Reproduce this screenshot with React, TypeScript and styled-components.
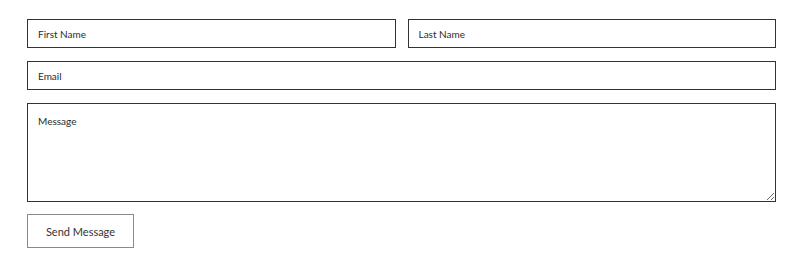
import React from "react";
import styled, { createGlobalStyle } from "styled-components";

const GlobalStyle = createGlobalStyle`
  body {
    margin: 0;
    background: #ffffff;
    font-family: "Lato", "Liberation Sans", sans-serif;
  }
`;

const App: React.FC = () => {
  return (
    <>
      <GlobalStyle />
      <ContactForm onSubmit={(e) => e.preventDefault()}>
        <NameRow>
          <Field type="text" placeholder="First Name" />
          <Field type="text" placeholder="Last Name" />
        </NameRow>
        <Field type="email" placeholder="Email" />
        <MessageArea placeholder="Message" />
        <SendButton type="submit">Send Message</SendButton>
      </ContactForm>
    </>
  );
};

export default App;

const ContactForm = styled.form`
  display: flex;
  flex-direction: column;
  align-items: flex-start;
  gap: 13px;
  padding: 19px 24px 0 27px;
`;

const NameRow = styled.div`
  display: grid;
  grid-template-columns: 1fr 1fr;
  gap: 12px;
  width: 100%;
`;

const Field = styled.input`
  box-sizing: border-box;
  width: 100%;
  height: 29px;
  padding: 0 10px;
  border: 1px solid #333333;
  border-radius: 0;
  background: #ffffff;
  font-family: "Lato", "Liberation Sans", sans-serif;
  font-size: 10px;
  color: #2b2b2b;
  outline: none;

  &::placeholder {
    color: #2b2b2b;
  }
`;

const MessageArea = styled.textarea`
  box-sizing: border-box;
  width: 100%;
  height: 99px;
  padding: 11px 10px;
  border: 1px solid #333333;
  border-radius: 0;
  background: #ffffff;
  font-family: "Lato", "Liberation Sans", sans-serif;
  font-size: 10px;
  color: #2b2b2b;
  outline: none;
  resize: vertical;
  margin-bottom: -1px;

  &::placeholder {
    color: #2b2b2b;
  }
`;

const SendButton = styled.button`
  width: 107px;
  height: 34px;
  border: 1px solid #8a8a8a;
  border-radius: 0;
  background: #ffffff;
  font-family: "Lato", "Liberation Sans", sans-serif;
  font-size: 11px;
  color: #333333;
  cursor: pointer;
`;
